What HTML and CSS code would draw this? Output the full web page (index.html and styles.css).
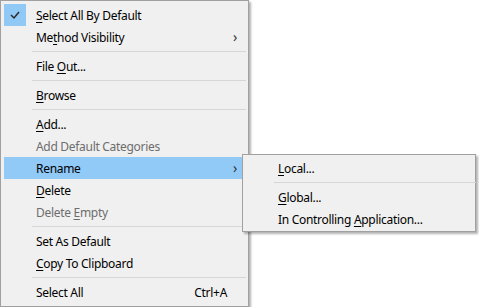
FILE: index.html
```html
<!DOCTYPE html>
<html lang="en">
<head>
    <meta charset="UTF-8">
    <title>Context Menu</title>
    <link rel="stylesheet" href="styles.css">
</head>
<body>
    <div class="menu main-menu">
        <div class="item">
            <span class="check checked">
                <svg width="22" height="22" viewBox="0 0 22 22"><polyline points="7,11 10,14 15,8" fill="none" stroke="#2b2b2b" stroke-width="1.5"/></svg>
            </span>
            <span class="label"><u>S</u>elect All By Default</span>
        </div>
        <div class="item">
            <span class="check"></span>
            <span class="label">Me<u>t</u>hod Visibility</span>
            <span class="arrow">&#x203A;</span>
        </div>
        <div class="sep"></div>
        <div class="item">
            <span class="check"></span>
            <span class="label">File <u>O</u>ut...</span>
        </div>
        <div class="sep"></div>
        <div class="item">
            <span class="check"></span>
            <span class="label"><u>B</u>rowse</span>
        </div>
        <div class="sep"></div>
        <div class="item">
            <span class="check"></span>
            <span class="label"><u>A</u>dd...</span>
        </div>
        <div class="item disabled">
            <span class="check"></span>
            <span class="label">Add Default Categories</span>
        </div>
        <div class="item active has-sub">
            <span class="check"></span>
            <span class="label">Rename</span>
            <span class="arrow">&#x203A;</span>

            <!-- submenu -->
            <div class="menu sub-menu">
                <div class="item">
                    <span class="check"></span>
                    <span class="label"><u>L</u>ocal...</span>
                </div>
                <div class="sep"></div>
                <div class="item">
                    <span class="check"></span>
                    <span class="label"><u>G</u>lobal...</span>
                </div>
                <div class="item">
                    <span class="check"></span>
                    <span class="label">In Controlling <u>A</u>pplication...</span>
                </div>
            </div>
        </div>
        <div class="item">
            <span class="check"></span>
            <span class="label"><u>D</u>elete</span>
        </div>
        <div class="item disabled">
            <span class="check"></span>
            <span class="label">Delete <u>E</u>mpty</span>
        </div>
        <div class="sep"></div>
        <div class="item">
            <span class="check"></span>
            <span class="label">Set As Default</span>
        </div>
        <div class="item">
            <span class="check"></span>
            <span class="label"><u>C</u>opy To Clipboard</span>
        </div>
        <div class="sep"></div>
        <div class="item">
            <span class="check"></span>
            <span class="label">Select All</span>
            <span class="shortcut">Ctrl+A</span>
        </div>
    </div>
</body>
</html>
```

FILE: styles.css
```css
body {
    margin: 0;
    background-color: #fff;
    font-family: "Noto Sans", "Open Sans", sans-serif;
    font-size: 12px;
    letter-spacing: -0.3px;
    color: #000;
}

.menu {
    background-color: #f0f0f0;
    border: 1px solid #a0a0a0;
    box-shadow: 2px 2px 2px rgba(0, 0, 0, 0.3);
}

.main-menu {
    width: 239px;
    padding: 3px 5px 3px 3px;
}

.item {
    display: flex;
    align-items: center;
    height: 22px;
}

.item u {
    text-decoration-thickness: 1px;
    text-underline-offset: 2px;
}

.check {
    display: flex;
    width: 22px;
    height: 22px;
    flex-shrink: 0;
}

.checked {
    background-color: #90c8f6;
}

.label {
    margin-left: 10px;
    flex: 1;
    white-space: nowrap;
}

.arrow {
    width: 10px;
    font-size: 14px;
    color: #333;
    margin-top: -2px;
}

.shortcut {
    margin-right: 16px;
}

.disabled {
    color: #6d6d6d;
}

.active {
    background-color: #91c9f7;
}

.sep {
    height: 1px;
    background-color: #d7d7d7;
    margin: 3px -3px 3px 28px;
}

/* Submenu of Rename */
.has-sub {
    position: relative;
}

.sub-menu {
    position: absolute;
    left: calc(100% - 1px);
    top: -3px;
    width: 227px;
    padding: 2px 2px 1px 3px;
}
```
